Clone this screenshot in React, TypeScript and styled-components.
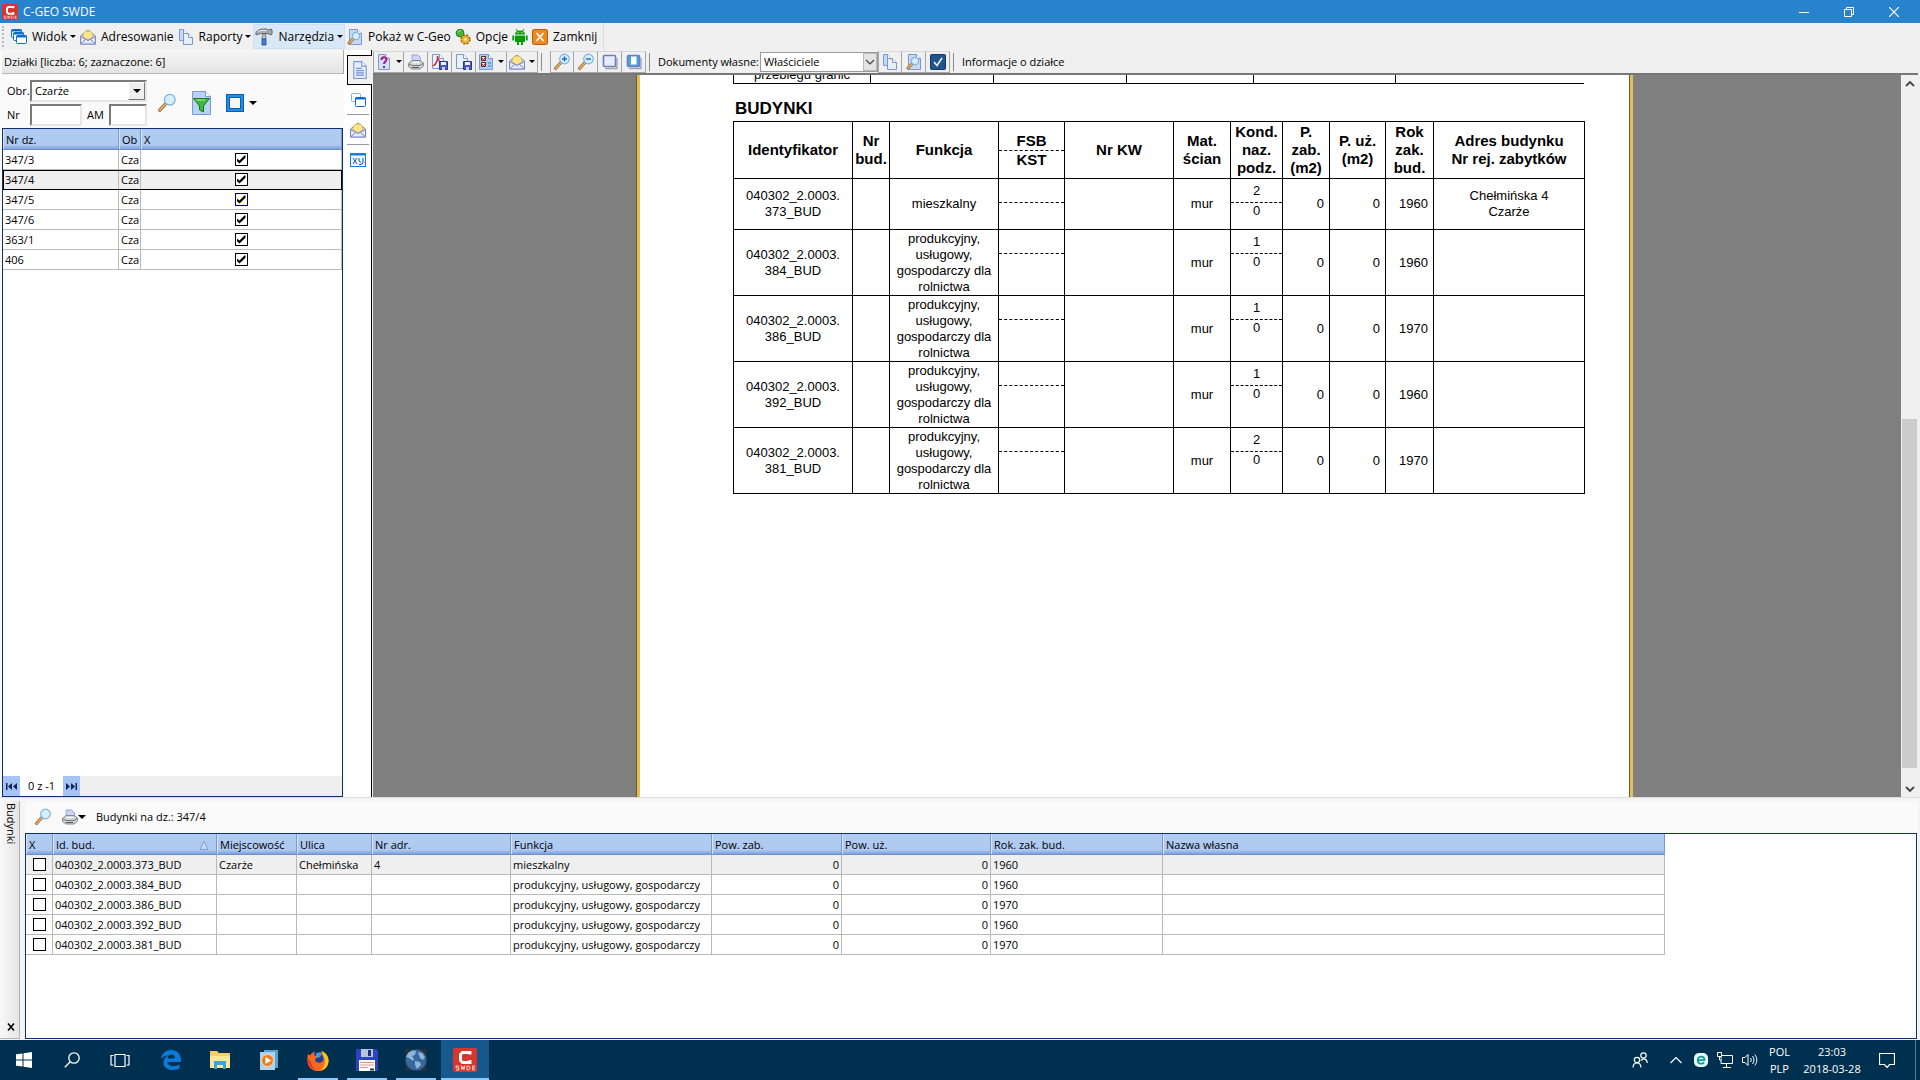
import React from 'react';
import styled, { createGlobalStyle, css } from 'styled-components';

const UI_FONT = '"Open Sans", "Noto Sans", sans-serif';
const DOC_FONT = '"Liberation Sans", Arial, sans-serif';

const GlobalStyle = createGlobalStyle`
  *, *::before, *::after { box-sizing: border-box; }
  body { margin: 0; background: #f0f0f0; }
  button, input, select { font: inherit; color: inherit; margin: 0; }
  button { border: 0; padding: 0; background: none; display: inline-flex; align-items: center; justify-content: center; }
  svg { display: block; flex: none; }
`;

/* ---------- shell ---------- */

const Shell = styled.div`
  display: flex;
  flex-direction: column;
  height: 100vh;
  overflow: hidden;
  font: 11px/16px ${UI_FONT};
  color: #000;
  background: #f0f0f0;
`;

const TitleBar = styled.header`
  display: flex;
  align-items: center;
  height: 23px;
  flex: none;
  padding: 0 4px 0 2px;
  background: #2882cc;
  color: #fff;
`;

const Title = styled.h1`
  flex: 1;
  margin: 0 0 0 5px;
  font: 12px/16px ${UI_FONT};
`;

const WindowButton = styled.button`
  width: 45px;
  height: 20px;
`;

/* ---------- menu ---------- */

const MenuBar = styled.nav`
  display: flex;
  align-items: stretch;
  align-self: flex-start;
  height: 27px;
  flex: none;
  padding: 1px 4px 1px 2px;
  font-size: 12px;
  border-right: 1px solid #dcdcdc;
`;

const Grip = styled.span`
  width: 2px;
  margin: 2px 5px 2px 0;
  border-left: 2px dotted #b4bac2;
`;

const MenuButton = styled.button<{ $hot?: boolean }>`
  gap: 5px;
  padding: 0 2px;
  white-space: nowrap;
  ${(p) => p.$hot && css`background: #d9e8f6; box-shadow: inset 0 0 0 1px #cbe0f4;`}
`;

const Caret = styled.span<{ $big?: boolean }>`
  border: ${(p) => (p.$big ? 4 : 3)}px solid transparent;
  border-top-color: #000;
  border-bottom: 0;
  margin-left: ${(p) => (p.$big ? 0 : -2)}px;
`;

/* ---------- workspace ---------- */

const Workspace = styled.main`
  display: flex;
  flex: 1;
  min-height: 0;
`;

const ParcelPanel = styled.section`
  display: flex;
  flex-direction: column;
  width: 344px;
  flex: none;
  padding-left: 2px;
  background: #fafafa;
`;

const PanelTitle = styled.h2`
  margin: 0;
  padding: 4px 2px 3px;
  height: 24px;
  font: 11px/16px ${UI_FONT};
  background: linear-gradient(#f6f6f6, #e4e4e4);
  border-right: 1px solid #a8a8a8;
  border-bottom: 1px solid #b8b8b8;
`;

const FilterBar = styled.form`
  display: flex;
  align-items: center;
  padding: 6px 5px 2px;
`;

const FilterFields = styled.div`
  display: grid;
  grid-template-columns: 23px 52px 27px 38px;
  grid-auto-rows: 22px;
  row-gap: 2px;
  align-items: center;
  label { white-space: nowrap; }
`;

const inset = css`
  border: 2px solid;
  border-color: #7a7a7a #e6e6e6 #e6e6e6 #7a7a7a;
  background: #fff;
`;

const TextBox = styled.input`
  ${inset}
  width: 100%;
  height: 22px;
`;

const AmLabel = styled.label`
  padding-left: 5px;
`;

const SelectWrap = styled.span<{ $flat?: boolean }>`
  position: relative;
  display: block;
  select {
    appearance: none;
    display: block;
    width: 100%;
    height: 22px;
    padding: 0 20px 0 3px;
    border-radius: 0;
    ${inset}
  }
  ${(p) => p.$flat
    ? css`width: 118px; select { border: 1px solid #9a9a9a; height: 20px; }`
    : css`grid-column: 2 / -1;`}
`;

const DropMark = styled.span<{ $flat?: boolean }>`
  position: absolute;
  top: 2px;
  right: 2px;
  bottom: 2px;
  width: 17px;
  display: flex;
  align-items: center;
  justify-content: center;
  pointer-events: none;
  background: #eee;
  border: 1px solid;
  border-color: #fff #777 #777 #fff;
  ${(p) => p.$flat && css`top: 1px; right: 1px; bottom: 1px; width: 14px; background: #e4e4e4; border-color: #bbb;`}
`;

const FilterAction = styled.button`
  gap: 5px;
  height: 24px;
  margin-left: 10px;
  & + & { margin-left: 15px; }
`;

/* ---------- data grids ---------- */

const GridFrame = styled.div`
  display: flex;
  flex-direction: column;
  flex: 1;
  min-height: 0;
  margin-right: 1px;
  border: 1px solid #0c2f78;
  background: #fff;
`;

const GridTable = styled.table<{ $full?: boolean }>`
  table-layout: fixed;
  border-spacing: 0;
  width: ${(p) => (p.$full ? '100%' : '1639px')};
  flex: none;
  th {
    height: 21px;
    padding: 1px 3px 0;
    font-weight: 400;
    text-align: left;
    white-space: nowrap;
    overflow: hidden;
    background: linear-gradient(#b2ccf0 0, #aecaf0 80%, #7e9fdc 100%);
    border-bottom: 1px solid #6f90cf;
    border-right: 1px solid #7898d0;
    box-shadow: inset 1px 0 #d6e6fa;
  }
  td {
    height: 20px;
    padding: 0 2px;
    white-space: nowrap;
    overflow: hidden;
    border-right: 1px solid #b9b9b9;
    border-bottom: 1px solid #b9b9b9;
  }
`;

const GridRow = styled.tr<{ $current?: boolean; $outlined?: boolean }>`
  ${(p) => p.$current && css`background: #efefef;`}
  ${(p) => p.$outlined && css`outline: 1px solid #000; outline-offset: -1px;`}
`;

const MarkCell = styled.td`
  text-align: center;
`;

const NumCell = styled.td`
  text-align: right;
`;

const SortHead = styled.span`
  display: flex;
  align-items: center;
  justify-content: space-between;
  padding-right: 4px;
`;

const Tick = styled.input<{ $hot?: boolean }>`
  appearance: none;
  display: block;
  width: 13px;
  height: 13px;
  margin: 0 auto;
  border: 1px solid ${(p) => (p.$hot ? '#00007a' : '#000')};
  background: ${(p) => (p.$hot ? '#fffbe0' : '#fff')};
  &:checked::before {
    content: '';
    display: block;
    width: 9px;
    height: 9px;
    margin: 1px;
    background: #000;
    clip-path: polygon(0 35%, 33% 60%, 88% 5%, 100% 5%, 100% 30%, 33% 95%, 0 65%);
  }
`;

const Navigator = styled.div`
  display: flex;
  align-items: center;
  margin-top: auto;
  height: 20px;
  background: #efefef;
`;

const NavButton = styled.button`
  width: 17px;
  height: 20px;
  background: #a5c4f4;
`;

const NavText = styled.span`
  width: 43px;
  line-height: 20px;
  text-align: center;
  background: #fff;
`;

/* ---------- side tabs ---------- */

const SideTabs = styled.div`
  display: flex;
  flex-direction: column;
  align-items: center;
  width: 28px;
  flex: none;
  padding-top: 5px;
  background: #fff;
  border-right: 1px solid #000;
`;

const SideTab = styled.button<{ $active?: boolean }>`
  width: 22px;
  height: 30px;
  border-bottom: 1px solid #999;
  &:last-child { border-bottom: 0; }
  ${(p) => p.$active && css`
    align-self: flex-end;
    width: 25px;
    margin-right: -1px;
    background: #f0f0f0;
    border: 1px solid #000;
    border-right: 0;
  `}
`;

/* ---------- report viewer ---------- */

const Viewer = styled.section`
  display: flex;
  flex-direction: column;
  flex: 1;
  min-width: 0;
  padding: 0 2px 0 1px;
`;

const ViewerBar = styled.div`
  display: flex;
  align-items: center;
  height: 25px;
  flex: none;
  border-bottom: 2px solid #777;
`;

const ToolButton = styled.button<{ $wide?: boolean }>`
  width: ${(p) => (p.$wide ? 31 : 24)}px;
  height: 22px;
  gap: 6px;
  border: 1px solid #a6a6a6;
  border-top-color: #d8d8d8;
  & + & { border-left: 0; }
`;

const BarDivider = styled.span`
  width: 1px;
  height: 18px;
  margin: 0 8px 0 3px;
  background: #8c8c8c;
`;

const BarLabel = styled.label`
  margin-right: 1px;
`;

const Canvas = styled.div`
  display: flex;
  flex: 1;
  min-height: 0;
  background: #808080;
`;

const SheetArea = styled.div`
  display: flex;
  justify-content: center;
  flex: 1;
  min-width: 0;
  padding-right: 4px;
  overflow: hidden;
`;

const Sheet = styled.article`
  width: 996px;
  flex: none;
  padding: 0 46px 0 93px;
  background: #fff;
  border: solid #e3bf5c;
  border-width: 0 3px;
  box-shadow: -1px 0 #6d5a22, inset -1px 0 #6d5a22;
  font: 13px/16px ${DOC_FONT};
  color: #000;
`;

const PreviousTable = styled.div`
  display: flex;
  flex-direction: column;
  justify-content: flex-end;
  height: 9px;
  overflow: hidden;
`;

const SheetHeading = styled.h2`
  margin: 15px 0 2px;
  padding-left: 2px;
  font: bold 17px/20px ${DOC_FONT};
`;

const SheetTable = styled.table`
  table-layout: fixed;
  width: 852px;
  flex: none;
  border-spacing: 0;
  border-left: 1px solid #000;
  text-align: center;
  th, td {
    padding: 0 3px;
    border-right: 1px solid #000;
    border-bottom: 1px solid #000;
  }
  th {
    height: 58px;
    padding: 0;
    border-top: 1px solid #000;
    font: bold 15px/18px ${DOC_FONT};
  }
  th, td { vertical-align: middle; }
  && .split { padding: 0; vertical-align: top; }
`;

const SheetRow = styled.tr<{ $tall?: boolean }>`
  height: ${(p) => (p.$tall ? 66 : 51)}px;
`;

const Numeric = styled.td`
  && { text-align: right; padding-right: 5px; }
`;

const Upper = styled.div<{ $head?: boolean }>`
  height: ${(p) => (p.$head ? 29 : 24)}px;
  line-height: ${(p) => (p.$head ? 18 : 23)}px;
  padding-top: ${(p) => (p.$head ? 10 : 0)}px;
  border-bottom: 1px dashed #000;
`;

const ScrollBar = styled.div`
  display: flex;
  flex-direction: column;
  width: 17px;
  flex: none;
  background: #f0f0f0;
`;

const ScrollButton = styled.button`
  width: 17px;
  height: 17px;
`;

const ScrollTrack = styled.div`
  display: grid;
  grid-template-rows: 327fr 349fr 12fr;
  flex: 1;
  &::before { content: ''; }
`;

const ScrollThumb = styled.div`
  margin: 0 1px;
  background: #cdcdcd;
`;

/* ---------- buildings ---------- */

const BuildingsDock = styled.section`
  display: flex;
  height: 243px;
  flex: none;
  padding: 3px 2px 1px 0;
  background: #f4f4f4;
  border-top: 1px solid #ddd;
`;

const DockTab = styled.div`
  display: flex;
  flex-direction: column;
  align-items: center;
  justify-content: space-between;
  width: 20px;
  margin-right: 5px;
  padding: 2px 0 6px 2px;
  background: linear-gradient(90deg, #f8f8f8, #e6e6e6);
  border-right: 1px solid #b5b5b5;
  border-bottom: 1px solid #b5b5b5;
`;

const DockTitle = styled.h2`
  margin: 0;
  font: 11px/16px ${UI_FONT};
  writing-mode: vertical-rl;
`;

const DockBody = styled.div`
  display: flex;
  flex-direction: column;
  flex: 1;
  min-width: 0;
  background: #fafafa;
`;

const DockBar = styled.div`
  display: flex;
  align-items: center;
  height: 32px;
  flex: none;
  padding: 0 0 0 9px;
`;

const DockAction = styled.button`
  margin-right: 10px;
`;

/* ---------- taskbar ---------- */

const TaskBar = styled.footer`
  display: flex;
  align-items: stretch;
  height: 40px;
  flex: none;
  background: #00304f;
  color: #fff;
`;

const TaskButton = styled.button<{ $running?: boolean; $active?: boolean }>`
  position: relative;
  width: 48px;
  &:nth-of-type(n + 4) { margin-left: 1px; }
  &:nth-of-type(4) { margin-left: 3px; }
  ${(p) => p.$active && css`background: #16598f;`}
  ${(p) => p.$running && css`
    &::after {
      content: '';
      position: absolute;
      left: ${p.$active ? 0 : 4}px;
      right: ${p.$active ? 0 : 4}px;
      bottom: 0;
      height: 2px;
      background: #8cc8f8;
    }
  `}
`;

const Tray = styled.div`
  display: flex;
  align-items: center;
  margin-left: auto;
  padding-right: 4px;
`;

const TrayButton = styled.button<{ $w: number }>`
  width: ${(p) => p.$w}px;
  height: 40px;
  line-height: 17px;
  text-align: center;
  white-space: nowrap;
`;

const ShowDesktop = styled.button`
  width: 5px;
  height: 40px;
  margin-right: -4px;
  border-left: 1px solid #5c7c92;
`;

/* ---------- icons ---------- */

type IconProps = { s?: number; vb?: number; children: React.ReactNode };
const Icon = ({ s = 16, vb = 16, children }: IconProps) => (
  <svg width={s} height={s} viewBox={`0 0 ${vb} ${vb}`} fill="none" aria-hidden="true">{children}</svg>
);

const Sheetlet = ({ x = 2, y = 0, w = 12, h = 16, fill = '#d3e1f8' }) => (
  <>
    <path d={`M${x + 0.5} ${y + 0.5}h${w - 5}l4 4v${h - 5}h${-(w - 1)}z`} fill={fill} stroke="#7d98cf" />
    <path d={`M${x + w - 4.5} ${y + 0.5}v4h4`} fill="#fff" stroke="#7d98cf" />
  </>
);

const Lens = ({ cx, cy, r, hx, hy }: { cx: number; cy: number; r: number; hx: number; hy: number }) => (
  <>
    <path d={`M${cx - r * 0.7} ${cy + r * 0.7}L${hx} ${hy}`} stroke="#8a5a2a" strokeWidth="3" strokeLinecap="round" />
    <path d={`M${cx - r * 0.8} ${cy + r * 0.8}L${hx} ${hy}`} stroke="#e8b36a" strokeWidth="1.6" strokeLinecap="round" />
    <circle cx={cx} cy={cy} r={r} fill="#d6effc" stroke="#7fb2e0" strokeWidth="1.2" />
  </>
);

const CascadeIcon = () => (
  <Icon>
    {[[0.5, 0.5], [2.5, 3.5], [5.5, 6.5]].map(([x, y]) => (
      <g key={x}>
        <rect x={x} y={y} width="10" height="8" rx="1" fill="#fff" stroke="#0c6ccc" />
        <path d={`M${x} ${y + 1}h10`} stroke="#0c6ccc" strokeWidth="2" />
      </g>
    ))}
  </Icon>
);

const EnvelopeIcon = () => (
  <Icon>
    <path d="M.5 7L8 1l7.500 6v8H.5z" fill="#c4d4f4" stroke="#7a86c4" />
    <path d="M3 8c0-5 2-6 5-6s5 1 5 6l-5 3z" fill="#fbe58a" stroke="#c8a848" strokeWidth=".7" />
    <path d="M.5 7.500L8 11.500l7.500-4V15H.5z" fill="#e2eafc" stroke="#7a86c4" />
    <path d="M1 14.500l4.500-4M15 14.500l-4.500-4" stroke="#7a86c4" />
  </Icon>
);

const PagesIcon = () => (
  <Icon>
    <Sheetlet x={1} y={0} w={9} h={12} fill="#c2dcf8" />
    <Sheetlet x={5} y={4} w={10} h={12} fill="#e6f0fc" />
  </Icon>
);

const HammerIcon = () => (
  <Icon s={18} vb={18}>
    <path d="M1 4.500C3 1.500 6 1 9 1h3l1 1.500 3-1.500 1 1v4l-1 1-3-1.500H6.500C5 5.500 3.500 6 1 7z" fill="#a9adb2" stroke="#5f6469" />
    <path d="M3 3.500C6 2 9 2.200 12 2.500" stroke="#eceff2" />
    <path d="M7.500 6h3l.5 5h-4z" fill="#c0c4c8" stroke="#6a6f74" strokeWidth=".8" />
    <path d="M7 11h4v6H7z" fill="#3f7fd0" stroke="#1f4f98" strokeWidth=".8" />
  </Icon>
);

const InspectIcon = () => (
  <Icon>
    <Sheetlet x={2} y={0} w={13} h={16} fill="#c6d8f6" />
    <Lens cx={9} cy={7} r={3.6} hx={2} hy={14} />
  </Icon>
);

const GearsIcon = () => (
  <Icon>
    <path d="M1 3l3-3 4 1 1 4-3 3-4-1z" fill="#42b53a" stroke="#257e22" />
    <path d="M3 3l3-1.500" stroke="#a7ee9c" />
    <circle cx="10.500" cy="10.500" r="4.200" fill="#e8a824" stroke="#a86e0c" strokeWidth="2" strokeDasharray="2.200 1.100" />
    <circle cx="10.500" cy="10.500" r="3.600" fill="#edb232" />
    <circle cx="10.500" cy="10.500" r="1.400" fill="#fff3cf" />
  </Icon>
);

const AndroidIcon = () => (
  <Icon>
    <path d="M4 0l1.500 2M12 0l-1.500 2" stroke="#0c9a0c" />
    <path d="M3 5.500C3 3 5 1.500 8 1.500s5 1.500 5 4zM3 6.500h10V13H3zM5 12h2v4H5zM9 12h2v4H9zM.3 6.500h1.900v5H.3zM13.800 6.500h1.900v5h-1.900z" fill="#0c9a0c" />
    <path d="M5.500 3.500h1M9.500 3.500h1" stroke="#fff" />
  </Icon>
);

const CloseAppIcon = () => (
  <Icon>
    <rect x=".5" y=".5" width="15" height="15" rx="1.500" fill="#ee8a1d" stroke="#b9610c" />
    <path d="M4.500 4l7 8M11.500 4l-7 8" stroke="#fff" strokeWidth="1.600" />
  </Icon>
);

const HelpPageIcon = () => (
  <Icon>
    <Sheetlet />
    <path d="M5.500 6c0-3.500 5-3.500 5-.5C10.500 7.500 8 7.500 8 10M8 12v2" stroke="#a0188c" strokeWidth="2" />
  </Icon>
);

const PrinterIcon = () => (
  <Icon>
    <path d="M4.500 8L4 1h5.500l3 2.500V8z" fill="#cdd4fa" stroke="#9aa6e0" />
    <path d="M.5 9.500l3.500-3h8l3.500 2.500v3L12 15H4L.5 12.500z" fill="#cfd2d4" stroke="#84888c" />
    <path d="M1 10l3 1.500h8l3-2" stroke="#75797d" />
    <path d="M4.500 8.500h7" stroke="#fafafa" strokeWidth="1.400" />
    <path d="M4 13.500h7" stroke="#55595d" />
  </Icon>
);

const Floppy = () => (
  <>
    <path d="M7.500 7.500h8v8h-8z" fill="#4a56c4" stroke="#2a348c" />
    <path d="M9 8h5v3H9z" fill="#eef1ff" />
    <path d="M10 13h3v3h-3z" fill="#c8cef4" />
  </>
);

const PdfSaveIcon = () => (
  <Icon>
    <Sheetlet x={0} w={12} h={15} fill="#eaf0fc" />
    <path d="M1 12c3-2 5-6 4.500-10C6 6 8 9 11 9" stroke="#c8202c" strokeWidth="1.400" />
    <Floppy />
  </Icon>
);

const PageSaveIcon = () => (
  <Icon>
    <Sheetlet x={0} w={12} h={15} fill="#eaf0fc" />
    <Floppy />
  </Icon>
);

const ChecklistIcon = () => (
  <Icon>
    <Sheetlet x={1} w={14} fill="#a9cdf4" />
    <path d="M3.500 2.500h4v4h-4zM3.500 8.500h4v4h-4z" fill="#fbeedd" stroke="#5a2c1c" />
    <path d="M4 4l1.500 2L8 2.500M4 10l1.500 2L8 8.500" stroke="#b02418" />
    <path d="M10 9h3M10 12h3" stroke="#4a7ac0" />
  </Icon>
);

const ZoomIcon = ({ sign, s = 18 }: { sign?: '+' | '-'; s?: number }) => (
  <Icon s={s} vb={18}>
    <Lens cx={11.5} cy={6} r={4.8} hx={2.5} hy={15.5} />
    {sign && <path d="M9 6h5" stroke="#1f62c0" strokeWidth="1.400" />}
    {sign === '+' && <path d="M11.500 3.500v5" stroke="#1f62c0" strokeWidth="1.400" />}
  </Icon>
);

const ScreenIcon = ({ page }: { page?: boolean }) => (
  <Icon>
    <rect x="1.500" y="1.500" width="12" height="11" rx="1" fill={page ? '#4aa4e4' : '#e6ecfa'} stroke="#6f7cc0" strokeWidth="1.600" />
    {page && <path d="M5 2.500h5.500v8H5z" fill="#fff" />}
    <path d="M3 14.500h12V4" stroke="#9aa2b4" strokeWidth="1.400" />
  </Icon>
);

const ApplyIcon = () => (
  <Icon>
    <rect x=".5" y=".5" width="15" height="15" rx="1" fill="#1f5590" stroke="#123962" />
    <path d="M4 8l3 3.500L12 4" stroke="#fff" strokeWidth="1.400" />
  </Icon>
);

const TextPageIcon = () => (
  <Icon s={18}>
    <Sheetlet fill="#e4eefc" />
    <path d="M4.500 6.500h5M4.500 8.500h7M4.500 10.500h7M4.500 12.500h7" stroke="#6f94d8" />
  </Icon>
);

const TwoWindowsIcon = () => (
  <Icon>
    <rect x="1.500" y="1.500" width="9" height="8" rx="1" fill="#fff" stroke="#78b0ec" />
    <rect x="5.500" y="5.500" width="10" height="9" rx="1" fill="#fff" stroke="#0c6ccc" />
    <path d="M5.500 6.500h10" stroke="#0c6ccc" strokeWidth="2" />
  </Icon>
);

const XyIcon = () => (
  <Icon>
    <rect x=".5" y="1.500" width="15" height="13" fill="#eef6ff" stroke="#1c7cd8" />
    <path d="M1 2.500h14" stroke="#1c7cd8" strokeWidth="2" />
    <path d="M3 6l4 6M7 6l-4 6M9 6v3l2 1.500M13 6v5l-2 1.500H9" stroke="#0c5cb4" />
  </Icon>
);

const FunnelIcon = () => (
  <svg width="19" height="24" viewBox="0 0 19 24" fill="none" aria-hidden="true">
    <path d="M.5.500h13l5 5v18H.5z" fill="#b7d4f6" stroke="#7d98cf" />
    <path d="M13.500.500v5h5" fill="#fff" stroke="#7d98cf" />
    <path d="M1.500 7.500h16L11.500 15v6l-4-2v-4z" fill="#3fb83f" stroke="#187818" />
    <path d="M4 9h9" stroke="#b4f0a8" />
  </svg>
);

const BlueFrameIcon = () => (
  <Icon s={18} vb={18}>
    <rect x=".5" y=".5" width="17" height="17" fill="#1f8fe6" stroke="#0c5cb0" />
    <rect x="3.500" y="3.500" width="11" height="11" fill="#fbf6ea" stroke="#0c5cb0" />
  </Icon>
);

const AppLogo = ({ s }: { s: number }) => (
  <Icon s={s} vb={24}>
    <rect width="24" height="24" rx="2" fill="#d8352c" />
    <path d="M17 6.500V4.500H9.500L7.500 6.500v6l2 2H17v-2.500" stroke="#fff" strokeWidth="3" />
    <path d="M6 18H3v1.800h3V22H3M8 17.500l1 4 1-3 1 3 1-4M14 18v3.800h2l1-1V19l-1-1zM22 18h-2.500v3.800H22M19.500 20H22" stroke="#ffe4e0" strokeWidth=".9" />
  </Icon>
);

const ArrowEnd = ({ back }: { back?: boolean }) => (
  <svg width="11" height="7" viewBox="0 0 11 7" aria-hidden="true" fill="#12245c">
    {back ? <path d="M0 0h1.500v7H0zM6 0v7L2 3.500zM11 0v7L7 3.500z" /> : <path d="M9.500 0H11v7H9.500zM5 0v7l4-3.500zM0 0v7l4-3.500z" />}
  </svg>
);

const Chevron = ({ up, color = '#444', w = 1.8 }: { up?: boolean; color?: string; w?: number }) => (
  <Icon s={10} vb={10}><path d={up ? 'M1 7l4-4 4 4' : 'M1 3l4 4 4-4'} stroke={color} strokeWidth={w} /></Icon>
);

/* ---------- data ---------- */

const parcels = ['347/3', '347/4', '347/5', '347/6', '363/1', '406'];

const FARM = 'produkcyjny, usługowy, gospodarczy dla rolnictwa';
const buildings = [
  { no: '373_BUD', use: 'mieszkalny', floors: 2, year: 1960, town: 'Czarże', street: 'Chełmińska', num: '4' },
  { no: '384_BUD', use: FARM, floors: 1, year: 1960 },
  { no: '386_BUD', use: FARM, floors: 1, year: 1970 },
  { no: '392_BUD', use: FARM, floors: 1, year: 1960 },
  { no: '381_BUD', use: FARM, floors: 2, year: 1970 },
];

const Cols = ({ widths }: { widths: number[] }) => (
  <colgroup>{widths.map((w, i) => <col key={i} width={w || undefined} />)}</colgroup>
);

/* ---------- parts ---------- */

const Parcels = () => (
  <ParcelPanel>
    <PanelTitle>Działki [liczba: 6; zaznaczone: 6]</PanelTitle>
    <FilterBar>
      <FilterFields>
        <label htmlFor="obr">Obr.</label>
        <SelectWrap>
          <select id="obr" defaultValue="Czarże"><option>Czarże</option></select>
          <DropMark><Caret $big /></DropMark>
        </SelectWrap>
        <label htmlFor="nr">Nr</label>
        <TextBox id="nr" />
        <AmLabel htmlFor="am">AM</AmLabel>
        <TextBox id="am" />
      </FilterFields>
      <FilterAction type="button" aria-label="Szukaj"><ZoomIcon s={20} /></FilterAction>
      <FilterAction type="button" aria-label="Filtr"><FunnelIcon /></FilterAction>
      <FilterAction type="button" aria-label="Zaznaczenie"><BlueFrameIcon /><Caret $big /></FilterAction>
    </FilterBar>
    <GridFrame>
      <GridTable $full>
        <Cols widths={[116, 22, 0]} />
        <thead><tr><th>Nr dz.</th><th>Ob</th><th>X</th></tr></thead>
        <tbody>
          {parcels.map((p) => (
            <GridRow key={p} $current={p === '347/4'} $outlined={p === '347/4'}>
              <td>{p}</td>
              <td>Cza</td>
              <MarkCell>
                <Tick type="checkbox" defaultChecked $hot={p === '347/5'} aria-label={p} />
              </MarkCell>
            </GridRow>
          ))}
        </tbody>
      </GridTable>
      <Navigator>
        <NavButton aria-label="Pierwszy"><ArrowEnd back /></NavButton>
        <NavText>0 z -1</NavText>
        <NavButton aria-label="Ostatni"><ArrowEnd /></NavButton>
      </Navigator>
    </GridFrame>
  </ParcelPanel>
);

const Report = () => (
  <Sheet>
    <PreviousTable>
      <SheetTable>
        <Cols widths={[137, 123, 133, 127, 142, 189]} />
        <tbody><tr><td>przebiegu granic</td><td /><td /><td /><td /><td /></tr></tbody>
      </SheetTable>
    </PreviousTable>
    <SheetHeading>BUDYNKI</SheetHeading>
    <SheetTable>
      <Cols widths={[119, 37, 109, 66, 109, 57, 52, 47, 56, 48, 151]} />
      <thead>
        <tr>
          <th>Identyfikator</th>
          <th>Nr<br />bud.</th>
          <th>Funkcja</th>
          <th className="split"><Upper $head>FSB</Upper>KST</th>
          <th>Nr KW</th>
          <th>Mat.<br />ścian</th>
          <th>Kond.<br />naz.<br />podz.</th>
          <th>P.<br />zab.<br />(m2)</th>
          <th>P. uż.<br />(m2)</th>
          <th>Rok<br />zak.<br />bud.</th>
          <th>Adres budynku<br />Nr rej. zabytków</th>
        </tr>
      </thead>
      <tbody>
        {buildings.map((b) => (
          <SheetRow key={b.no} $tall={b.use === FARM}>
            <td>040302_2.0003.<br />{b.no}</td>
            <td />
            <td>{b.use}</td>
            <td className="split"><Upper /></td>
            <td />
            <td>mur</td>
            <td className="split"><Upper>{b.floors}</Upper>0</td>
            <Numeric>0</Numeric>
            <Numeric>0</Numeric>
            <Numeric>{b.year}</Numeric>
            <td>{b.town && <>{b.street} {b.num}<br />{b.town}</>}</td>
          </SheetRow>
        ))}
      </tbody>
    </SheetTable>
  </Sheet>
);

const ReportViewer = () => (
  <Viewer>
    <ViewerBar>
      <ToolButton $wide aria-label="Rodzaj raportu"><HelpPageIcon /><Caret /></ToolButton>
      <ToolButton aria-label="Drukuj"><PrinterIcon /></ToolButton>
      <ToolButton aria-label="Zapisz PDF"><PdfSaveIcon /></ToolButton>
      <ToolButton aria-label="Zapisz"><PageSaveIcon /></ToolButton>
      <ToolButton $wide aria-label="Zakres"><ChecklistIcon /><Caret /></ToolButton>
      <ToolButton $wide aria-label="Wyślij"><EnvelopeIcon /><Caret /></ToolButton>
      <BarDivider />
      <ToolButton aria-label="Powiększ"><ZoomIcon sign="+" /></ToolButton>
      <ToolButton aria-label="Pomniejsz"><ZoomIcon sign="-" /></ToolButton>
      <ToolButton aria-label="Szerokość"><ScreenIcon /></ToolButton>
      <ToolButton aria-label="Cała strona"><ScreenIcon page /></ToolButton>
      <BarDivider />
      <BarLabel htmlFor="docs">Dokumenty własne:</BarLabel>
      <SelectWrap $flat>
        <select id="docs" defaultValue="Właściciele"><option>Właściciele</option></select>
        <DropMark $flat><Chevron w={1.2} /></DropMark>
      </SelectWrap>
      <ToolButton aria-label="Kopiuj"><PagesIcon /></ToolButton>
      <ToolButton aria-label="Podgląd"><InspectIcon /></ToolButton>
      <ToolButton aria-label="Zastosuj"><ApplyIcon /></ToolButton>
      <BarDivider />
      <span>Informacje o działce</span>
    </ViewerBar>
    <Canvas>
      <SheetArea><Report /></SheetArea>
      <ScrollBar>
        <ScrollButton aria-label="W górę"><Chevron up /></ScrollButton>
        <ScrollTrack><ScrollThumb /></ScrollTrack>
        <ScrollButton aria-label="W dół"><Chevron /></ScrollButton>
      </ScrollBar>
    </Canvas>
  </Viewer>
);

const Buildings = () => (
  <BuildingsDock>
    <DockTab>
      <DockTitle>Budynki</DockTitle>
      <button aria-label="Zamknij panel">
        <Icon s={10} vb={10}><path d="M2 1.500l6 7M8 1.500l-6 7" stroke="#000" strokeWidth="1.600" /></Icon>
      </button>
    </DockTab>
    <DockBody>
      <DockBar>
        <DockAction aria-label="Szukaj"><ZoomIcon /></DockAction>
        <DockAction aria-label="Drukuj"><PrinterIcon /><Caret $big /></DockAction>
        <span>Budynki na dz.: 347/4</span>
      </DockBar>
      <GridFrame>
        <GridTable>
          <Cols widths={[27, 164, 80, 75, 139, 201, 130, 149, 172, 502]} />
          <thead>
            <tr>
              <th>X</th>
              <th>
                <SortHead>Id. bud.
                  <Icon s={10} vb={10}><path d="M1 9.500L5 1l4 8.500z" fill="#c6daf6" stroke="#7f9fd8" /></Icon>
                </SortHead>
              </th>
              <th>Miejscowość</th><th>Ulica</th><th>Nr adr.</th><th>Funkcja</th>
              <th>Pow. zab.</th><th>Pow. uż.</th><th>Rok. zak. bud.</th><th>Nazwa własna</th>
            </tr>
          </thead>
          <tbody>
            {buildings.map((b, i) => (
              <GridRow key={b.no} $current={i === 0}>
                <MarkCell><Tick type="checkbox" aria-label={b.no} /></MarkCell>
                <td>040302_2.0003.{b.no}</td>
                <td>{b.town}</td>
                <td>{b.street}</td>
                <td>{b.num}</td>
                <td>{b.use.replace(' dla rolnictwa', '')}</td>
                <NumCell>0</NumCell>
                <NumCell>0</NumCell>
                <td>{b.year}</td>
                <td />
              </GridRow>
            ))}
          </tbody>
        </GridTable>
      </GridFrame>
    </DockBody>
  </BuildingsDock>
);

const Tasks = () => (
  <TaskBar>
    <TaskButton aria-label="Start">
      <Icon><path d="M0 2.300L6.500 1.400v6H0zM7.500 1.200L16 0v7.400H7.500zM0 8.500h6.500v6L0 13.700zM7.500 8.500H16V16l-8.500-1.200z" fill="#fff" /></Icon>
    </TaskButton>
    <TaskButton aria-label="Szukaj">
      <Icon><circle cx="10" cy="6" r="5.200" stroke="#fff" strokeWidth="1.300" /><path d="M6.300 9.700L.8 15.200" stroke="#fff" strokeWidth="1.300" /></Icon>
    </TaskButton>
    <TaskButton aria-label="Widok zadań">
      <Icon s={20} vb={20}><path d="M5 4.500h10v12H5zM3.500 5.500H1v9.500h2.500M16.500 5.500H19v9.500h-2.500" stroke="#fff" strokeWidth="1.200" /></Icon>
    </TaskButton>
    <TaskButton aria-label="Edge">
      <Icon s={20} vb={20}>
        <path d="M0 9C.8 3.500 4.500 0 10 0c6 0 10 4 10 10v2H6.500c.3 3 3 4.300 6 4.300 2.200 0 4.200-.6 6-1.700v4C16.500 19.600 14 20 11.500 20 6 20 2.500 17 2.500 12.500 2.500 9 4.500 6.500 7.500 5.500 4.500 5.500 1.800 6.500 0 9zM6.500 8.500H14C14 6 12.500 4.600 10.300 4.600S6.900 6.200 6.500 8.500z" fill="#0c7ad8" />
      </Icon>
    </TaskButton>
    <TaskButton aria-label="Eksplorator">
      <Icon s={22} vb={22}>
        <path d="M1 2h7l2 2h11v15H1z" fill="#f4cf6a" />
        <path d="M1 7h20v12H1z" fill="#fbe79c" />
        <path d="M5 12h12v8h-3v-4H8v4H5z" fill="#3aa6d8" />
      </Icon>
    </TaskButton>
    <TaskButton aria-label="Odtwarzacz">
      <Icon s={20} vb={20}>
        <path d="M5 0h14v18H5z" fill="#5aa2d0" />
        <path d="M1 2h15v18H1z" fill="#a9d4ec" />
        <circle cx="8.500" cy="10.500" r="6" fill="#f07c1c" stroke="#fde0c0" strokeWidth=".8" />
        <path d="M6.500 7v7l6-3.500z" fill="#fff" />
      </Icon>
    </TaskButton>
    <TaskButton $running aria-label="Firefox">
      <Icon s={22} vb={22}>
        <circle cx="11" cy="12" r="9" fill="#1c3f9c" />
        <path d="M9 5c2-2 5-2 6 0l-2 3-4 1z" fill="#3a9ae4" />
        <path d="M1 5l2 1.500C4 4.500 6 3 8 2.500 7 4 7 5 7.500 6.500L11 8l-3 2c0 4 5 5 8 2 1-3 0-6-3-8 5-1 9 4 8.500 9A10.500 9.800 0 0 1 .5 12C.3 9 .3 7 1 5z" fill="#f56a1c" />
        <path d="M14 2c5 1 8 6 7.500 10.500-.5 5-4 8.500-8 9C18 18 19 12 17 8c-.5-2-1.500-4-3-6z" fill="#fbc62c" />
        <path d="M1 10c0 6 4 11 9 11-3-1-6-4-6-8z" fill="#e0283c" />
      </Icon>
    </TaskButton>
    <TaskButton $running aria-label="Menedżer plików">
      <Icon s={24} vb={24}>
        <path d="M1 1h20l2 2v20H1z" fill="#2a44c8" />
        <path d="M6 1h12v8H6z" fill="#b8c4d8" /><path d="M13 2h3v6h-3z" fill="#1c2c80" />
        <path d="M4 12h16v11H4z" fill="#fff" />
        <path d="M5 14.500h14M5 17h14M5 19.500h8" stroke="#e88c90" />
        <path d="M15 20.500h4v2h-4z" fill="#333" />
      </Icon>
    </TaskButton>
    <TaskButton $running aria-label="Globus">
      <Icon s={24} vb={24}>
        <rect x="1" y="1" width="22" height="22" fill="#24303a" />
        <circle cx="12" cy="12" r="10.500" fill="#34689f" />
        <path d="M4 5c3-3 7-3 8-2l-1 4-3 1 2 3-1 2-4-3-3-1zM14 4l4 1 3 4-2 3-3-2zM11 13l5 1 1 3-4 4-2-4z" fill="#8fb4d8" />
      </Icon>
    </TaskButton>
    <TaskButton $running $active aria-label="C-GEO SWDE"><AppLogo s={24} /></TaskButton>
    <Tray>
      <TrayButton $w={36} aria-label="Kontakty">
        <Icon><g stroke="#fff" strokeWidth="1.200"><circle cx="11.500" cy="3.500" r="2.700" /><path d="M9 8.500c3-3 6-1.500 6.300 2.500" /><circle cx="5" cy="8" r="2.700" /><path d="M1 15.500c.3-6 7.700-6 8 0" /></g></Icon>
      </TrayButton>
      <TrayButton $w={36} aria-label="Ukryte ikony">
        <Icon s={14} vb={14}><path d="M1.500 10L7 4.500l5.500 5.500" stroke="#fff" strokeWidth="1.200" /></Icon>
      </TrayButton>
      <TrayButton $w={14} aria-label="ESET">
        <Icon s={14} vb={14}><rect width="14" height="14" rx="5" fill="#e8fbf8" /><path d="M3.500 7.200h7C10.500 2.500 3.700 2.500 3.700 7.200c0 4 5 4.200 6.500 2.200" stroke="#0c9a94" strokeWidth="1.800" /></Icon>
      </TrayButton>
      <TrayButton $w={34} aria-label="Sieć">
        <Icon><path d="M4 3.500h11.500v8H4zM9.500 12v3M6 15.500h8" stroke="#fff" /><path d="M.5.500h4v4h-4zM2.500 5v3h2" stroke="#fff" fill="#00304f" /></Icon>
      </TrayButton>
      <TrayButton $w={16} aria-label="Głośność">
        <Icon><path d="M.5 5.500h2.500l3-3v11l-3-3H.5zM8.500 6c1 1.200 1 2.800 0 4M10.500 4c2 2.500 2 5.500 0 8M12.800 2.500c2.700 3.500 2.700 7.500 0 11" stroke="#fff" /></Icon>
      </TrayButton>
      <TrayButton $w={43}>POL<br />PLP</TrayButton>
      <TrayButton $w={62}>23:03<br />2018-03-28</TrayButton>
      <TrayButton $w={48} aria-label="Powiadomienia">
        <Icon><path d="M.5 1.500h15v11h-5L8 15.500 5.500 12.500h-5z" stroke="#fff" strokeWidth="1.200" /></Icon>
      </TrayButton>
      <TrayButton $w={4} aria-hidden="true" tabIndex={-1} />
      <ShowDesktop aria-label="Pokaż pulpit" />
    </Tray>
  </TaskBar>
);

export default function App() {
  return (
    <Shell>
      <GlobalStyle />
      <TitleBar>
        <AppLogo s={16} />
        <Title>C-GEO SWDE</Title>
        <WindowButton aria-label="Minimalizuj"><Icon s={10} vb={10}><path d="M0 5.500h10" stroke="#fff" /></Icon></WindowButton>
        <WindowButton aria-label="Przywróć"><Icon s={10} vb={10}><path d="M.5 2.500h7v7h-7zM2.500 2.500v-2h7v7h-2" stroke="#fff" /></Icon></WindowButton>
        <WindowButton aria-label="Zamknij okno"><Icon s={10} vb={10}><path d="M0 0l10 10M10 0L0 10" stroke="#fff" strokeWidth="1.200" /></Icon></WindowButton>
      </TitleBar>
      <MenuBar>
        <Grip />
        <MenuButton><CascadeIcon />Widok<Caret /></MenuButton>
        <MenuButton><EnvelopeIcon />Adresowanie</MenuButton>
        <MenuButton><PagesIcon />Raporty<Caret /></MenuButton>
        <MenuButton $hot><HammerIcon />Narzędzia<Caret /></MenuButton>
        <MenuButton><InspectIcon />Pokaż w C-Geo</MenuButton>
        <MenuButton><GearsIcon />Opcje</MenuButton>
        <MenuButton aria-label="Android"><AndroidIcon /></MenuButton>
        <MenuButton><CloseAppIcon />Zamknij</MenuButton>
      </MenuBar>
      <Workspace>
        <Parcels />
        <SideTabs>
          <SideTab $active aria-label="Raport"><TextPageIcon /></SideTab>
          <SideTab aria-label="Okna"><TwoWindowsIcon /></SideTab>
          <SideTab aria-label="Adresy"><EnvelopeIcon /></SideTab>
          <SideTab aria-label="Współrzędne"><XyIcon /></SideTab>
        </SideTabs>
        <ReportViewer />
      </Workspace>
      <Buildings />
      <Tasks />
    </Shell>
  );
}
